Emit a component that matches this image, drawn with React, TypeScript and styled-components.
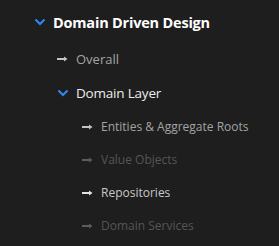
import React from "react";
import styled, { createGlobalStyle } from "styled-components";

const GlobalStyle = createGlobalStyle`
  html, body {
    margin: 0;
    padding: 0;
    background: #1e1e1e;
  }
  body {
    font-family: "Open Sans", "Noto Sans", sans-serif;
  }
`;

type Tone = "bright" | "normal" | "dim";

const textColors: Record<Tone, string> = {
  bright: "#c8c8c8",
  normal: "#a4a4a4",
  dim: "#555555",
};

const arrowColors: Record<Tone, string> = {
  bright: "#e2e2e2",
  normal: "#c4c4c4",
  dim: "#5c5c5c",
};

const Page = styled.div`
  width: 279px;
  height: 246px;
  background: #1e1e1e;
  padding-top: 9px;
  box-sizing: border-box;
`;

const Tree = styled.ul`
  list-style: none;
  margin: 0;
  padding: 0;
`;

const Row = styled.li<{ $indent: number; $height: number; $gap?: number }>`
  display: flex;
  align-items: center;
  height: ${(p) => p.$height}px;
  margin-top: ${(p) => p.$gap ?? 0}px;
  padding-left: ${(p) => p.$indent}px;
`;

const Chevron = styled.svg`
  width: 12px;
  height: 8px;
  flex: none;
  margin-right: 7px;
`;

const Arrow = styled.span<{ $tone: Tone }>`
  width: 12px;
  margin-right: 7px;
  flex: none;
  display: flex;
  align-items: center;
  svg {
    display: block;
  }
  color: ${(p) => arrowColors[p.$tone]};
`;

const Title = styled.span`
  font-size: 14.5px;
  font-weight: 700;
  color: #ffffff;
  letter-spacing: -0.2px;
`;

const Group = styled.span`
  font-size: 13.5px;
  font-weight: 400;
  color: #ececec;
  letter-spacing: -0.2px;
`;

const Label = styled.span<{ $tone: Tone; $size: number }>`
  font-size: ${(p) => p.$size}px;
  color: ${(p) => textColors[p.$tone]};
`;

const Down = () => (
  <Chevron viewBox="0 0 12 8">
    <path d="M1.5 1.5 L6 6 L10.5 1.5" fill="none" stroke="#2f86f0" strokeWidth="2.2" />
  </Chevron>
);

const RightArrow = ({ tone }: { tone: Tone }) => (
  <Arrow $tone={tone}>
    <svg width="11" height="6" viewBox="0 0 11 6">
      <path d="M0 3 H9" stroke="currentColor" strokeWidth="2" />
      <path d="M7 0.5 L10.5 3 L7 5.5 Z" fill="currentColor" />
    </svg>
  </Arrow>
);

const leaves: { label: string; tone: Tone }[] = [
  { label: "Entities & Aggregate Roots", tone: "normal" },
  { label: "Value Objects", tone: "dim" },
  { label: "Repositories", tone: "bright" },
  { label: "Domain Services", tone: "dim" },
];

export default function App() {
  return (
    <>
      <GlobalStyle />
      <Page>
        <Tree>
          <Row $indent={34} $height={26}>
            <Down />
            <Title>Domain Driven Design</Title>
          </Row>
          <Row $indent={57} $height={33} $gap={7}>
            <RightArrow tone="normal" />
            <Label $tone="normal" $size={13}>Overall</Label>
          </Row>
          <Row $indent={57} $height={35}>
            <Down />
            <Group>Domain Layer</Group>
          </Row>
          {leaves.map((l) => (
            <Row key={l.label} $indent={82} $height={33}>
              <RightArrow tone={l.tone} />
              <Label $tone={l.tone} $size={12}>{l.label}</Label>
            </Row>
          ))}
        </Tree>
      </Page>
    </>
  );
}
